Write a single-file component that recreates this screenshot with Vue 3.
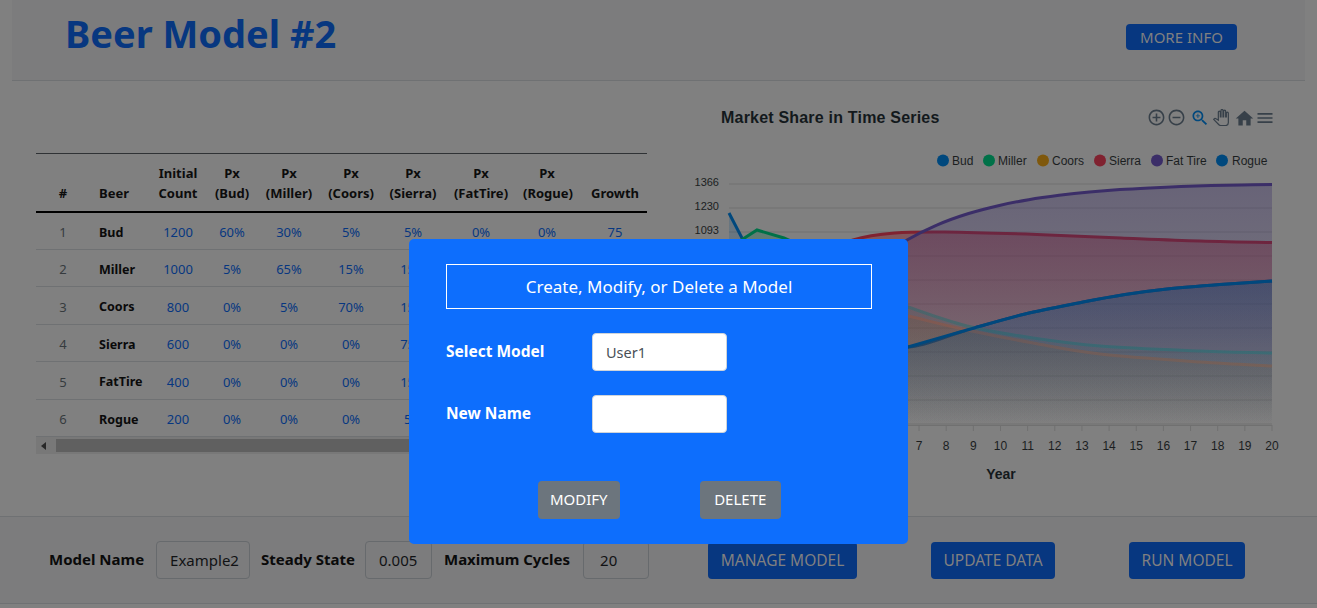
<script setup>
const cols = [54, 65, 46, 62, 52, 72, 52, 84, 48, 88]
const heads = [['#'], ['Beer'], ['Initial', 'Count'], ['Px', '(Bud)'], ['Px', '(Miller)'], ['Px', '(Coors)'], ['Px', '(Sierra)'], ['Px', '(FatTire)'], ['Px', '(Rogue)'], ['Growth']]
const rows = [
  [1, 'Bud', 1200, '60%', '30%', '5%', '5%', '0%', '0%', 75],
  [2, 'Miller', 1000, '5%', '65%', '15%', '15%', '0%', '0%', 50],
  [3, 'Coors', 800, '0%', '5%', '70%', '15%', '10%', '0%', 40],
  [4, 'Sierra', 600, '0%', '0%', '0%', '75%', '15%', '10%', 30],
  [5, 'FatTire', 400, '0%', '0%', '0%', '15%', '75%', '10%', 20],
  [6, 'Rogue', 200, '0%', '0%', '0%', '5%', '5%', '90%', 10]
]

const smooth = (p) => {
  let d = `M${p[0][0]} ${p[0][1]}`
  for (let i = 0; i < p.length - 1; i++) {
    const a = p[i - 1] || p[i], b = p[i], c = p[i + 1], e = p[i + 2] || c
    const c1x = b[0] + (c[0] - a[0]) / 6, c1y = b[1] + (c[1] - a[1]) / 6
    const c2x = c[0] - (e[0] - b[0]) / 6, c2y = c[1] - (e[1] - b[1]) / 6
    d += `C${c1x.toFixed(1)} ${c1y.toFixed(1)} ${c2x.toFixed(1)} ${c2y.toFixed(1)} ${c[0]} ${c[1]}`
  }
  return d
}
// Fat Tire settles exponentially toward its ceiling to the right of the dialog.
const fatTail = Array.from({ length: 13 }, (_, i) => {
  const x = 907 + (i * 365) / 12
  return [Number(x.toFixed(1)), Number((183 + 57 * Math.exp(-(x - 907) / 99)).toFixed(1))]
})
const rogueTail = [[908, 347], [967, 330], [1025, 314], [1083, 302], [1125, 294.5], [1167, 289], [1220, 284.5], [1272, 281]]
// Drawn in series order: each later translucent area washes over the earlier lines.
const raw = [
  { id: 'bud', color: '#00487d', o: 0.2, sharp: true, pts: [[729, 213], [757, 267], [784, 300], [860, 335], ...rogueTail] },
  { id: 'mil', color: '#007148', stroke: 'url(#miller-line)', o: 0.25, sharp: true, pts: [[729, 248], [757, 230], [784, 238], [811, 250], [850, 285], [908, 307], [967, 326], [1033, 338], [1100, 346], [1200, 351], [1272, 353]] },
  { id: 'coo', color: '#7f580c', stroke: '#8f7558', o: 0.25, pts: [[729, 283], [800, 295], [860, 305], [908, 316], [967, 330], [1033, 343], [1100, 354], [1200, 362], [1272, 366]] },
  { id: 'sie', color: '#802230', o: 0.45, pts: [[729, 319], [756, 290], [800, 262], [853, 240], [895, 233], [945, 232], [1037, 234.5], [1121, 238], [1200, 241], [1272, 242.5]] },
  { id: 'fat', color: '#3b2e68', o: 0.35, pts: [[729, 354], [756, 340], [800, 310], [850, 275], ...fatTail] },
  { id: 'rog', color: '#00487d', o: 0.32, pts: [[729, 389], [780, 380], [850, 365], ...rogueTail] }
]
const series = raw.map((s) => {
  const line = s.sharp
    ? `M${s.pts.slice(0, 4).map((p) => p.join(' ')).join('L')}` + smooth(s.pts.slice(3)).replace(/^M[^C]*/, '')
    : smooth(s.pts)
  const last = s.pts[s.pts.length - 1]
  return { ...s, line, area: `${line}L${last[0]} 425L${s.pts[0][0]} 425Z` }
})
const grid = [184, 208, 232, 256, 280, 304, 328, 352, 376, 400, 424]
const yLabels = ['1366', '1230', '1093', '956', '820', '683', '546', '410', '273', '137', '0']
const xLabels = Array.from({ length: 21 }, (_, i) => ({ t: i, x: 729 + 27.15 * i }))
const legend = [
  { t: 'Bud', cx: 943, x: 952, c: '#00487d' },
  { t: 'Miller', cx: 989, x: 998, c: '#007148' },
  { t: 'Coors', cx: 1043, x: 1052, c: '#7f580c' },
  { t: 'Sierra', cx: 1100, x: 1109, c: '#802230' },
  { t: 'Fat Tire', cx: 1157, x: 1166, c: '#3b2e68' },
  { t: 'Rogue', cx: 1222, x: 1232, c: '#00487d' }
]
</script>

<template>
  <div class="page">
    <header class="top">
      <h1>Beer Model #2</h1>
      <button class="btn info">MORE INFO</button>
    </header>

    <main class="main">
      <section class="tablewrap">
        <div class="clip">
          <table>
            <colgroup>
              <col v-for="(w, i) in cols" :key="i" :style="{ width: w + 'px' }" />
            </colgroup>
            <thead>
              <tr>
                <th v-for="(h, i) in heads" :key="i" :class="{ left: i === 1 }">
                  <span v-for="l in h" :key="l" class="hl">{{ l }}</span>
                </th>
              </tr>
            </thead>
            <tbody>
              <tr v-for="r in rows" :key="r[0]">
                <td v-for="(v, i) in r" :key="i" :class="i === 0 ? 'num' : i === 1 ? 'name' : 'val'">{{ v }}</td>
              </tr>
            </tbody>
          </table>
        </div>
        <div class="scroll">
          <span class="arrow"></span>
          <span class="thumb"></span>
        </div>
      </section>

      <svg class="chart" viewBox="660 81 657 435" width="657" height="435">
        <defs>
          <linearGradient v-for="s in series" :id="'g-' + s.id" :key="s.id" x1="0" y1="0" x2="0" y2="1">
            <stop offset="0" :stop-color="s.color" :stop-opacity="s.o" />
            <stop offset="1" :stop-color="s.color" stop-opacity="0" />
          </linearGradient>
          <linearGradient id="miller-line" gradientUnits="userSpaceOnUse" x1="820" y1="0" x2="905" y2="0">
            <stop offset="0" stop-color="#007148" />
            <stop offset="1" stop-color="#3f8a80" />
          </linearGradient>
        </defs>
        <text x="721" y="122.5" class="ctitle">Market Share in Time Series</text>

        <g fill="#374049">
          <svg x="1147" y="108" width="19" height="19" viewBox="0 0 24 24"><path d="M13 7h-2v4H7v2h4v4h2v-4h4v-2h-4V7zm-1-5C6.48 2 2 6.48 2 12s4.48 10 10 10 10-4.48 10-10S17.52 2 12 2zm0 18c-4.41 0-8-3.59-8-8s3.59-8 8-8 8 3.59 8 8-3.59 8-8 8z" /></svg>
          <svg x="1167" y="108" width="19" height="19" viewBox="0 0 24 24"><path d="M7 11v2h10v-2H7zm5-9C6.48 2 2 6.48 2 12s4.48 10 10 10 10-4.48 10-10S17.52 2 12 2zm0 18c-4.41 0-8-3.59-8-8s3.59-8 8-8 8 3.59 8 8-3.59 8-8 8z" /></svg>
          <svg x="1190" y="108" width="20" height="20" viewBox="0 0 24 24" fill="#00487d"><path d="M15.5 14h-.79l-.28-.27C15.41 12.59 16 11.11 16 9.5 16 5.91 13.09 3 9.5 3S3 5.91 3 9.5 5.91 16 9.5 16c1.61 0 3.09-.59 4.23-1.57l.27.28v.79l5 4.99L20.49 19l-4.99-5zm-6 0C7.01 14 5 11.99 5 9.5S7.01 5 9.5 5 14 7.01 14 9.5 11.99 14 9.5 14z" /><path d="M12 10h-2v2H9v-2H7V9h2V7h1v2h2v1z" /></svg>
          <svg x="1213" y="109" width="16" height="17" viewBox="0 0 24 24" fill="none" stroke="#374049" stroke-width="1.8"><path d="M23 5.5V20c0 2.2-1.8 4-4 4h-7.3c-1.08 0-2.1-.43-2.85-1.19L1 14.83s1.26-1.23 1.3-1.25c.22-.19.49-.29.79-.29.22 0 .42.06.6.16.04.01 4.31 2.46 4.31 2.46V4c0-.83.67-1.5 1.5-1.5S11 3.17 11 4v7h1V1.5c0-.83.67-1.5 1.5-1.5S15 .67 15 1.5V11h1V2.5c0-.83.67-1.5 1.5-1.5s1.5.67 1.5 1.5V11h1V5.5c0-.83.67-1.5 1.5-1.5s1.5.67 1.5 1.5z" /></svg>
          <svg x="1234" y="108" width="21" height="21" viewBox="0 0 24 24"><path d="M10 20v-6h4v6h5v-8h3L12 3 2 12h3v8z" /></svg>
          <svg x="1255" y="108" width="20" height="20" viewBox="0 0 24 24"><path d="M3 18h18v-2H3v2zm0-5h18v-2H3v2zm0-7v2h18V6H3z" /></svg>
        </g>

        <g class="legend">
          <g v-for="l in legend" :key="l.t">
            <circle :cx="l.cx" cy="160.5" r="6" :fill="l.c" />
            <text :x="l.x" y="165">{{ l.t }}</text>
          </g>
        </g>

        <line v-for="y in grid" :key="y" x1="729" x2="1272" :y1="y" :y2="y" stroke="#707070" />
        <text v-for="(t, i) in yLabels" :key="t" x="719" :y="grid[i] + 2" class="ylab" text-anchor="end">{{ t }}</text>

        <g v-for="s in series" :key="s.id">
          <path :d="s.area" :fill="'url(#g-' + s.id + ')'" />
          <path :d="s.line" fill="none" :stroke="s.stroke || s.color" stroke-width="3" />
        </g>

        <line x1="729" x2="1272" y1="425.5" y2="425.5" stroke="#707070" />
        <g stroke="#707070">
          <line v-for="x in xLabels" :key="x.t" :x1="x.x" :x2="x.x" y1="425" y2="431" />
        </g>
        <text v-for="x in xLabels" :key="'x' + x.t" :x="x.x" y="449.5" class="axis" text-anchor="middle">{{ x.t }}</text>
        <text x="1001" y="479" class="axtitle" text-anchor="middle">Year</text>
      </svg>
    </main>

    <footer class="bottom">
      <label class="flabel">Model Name</label>
      <input class="finput w94" value="Example2" readonly />
      <label class="flabel">Steady State</label>
      <input class="finput w67" value="0.005" readonly />
      <label class="flabel">Maximum Cycles</label>
      <input class="finput w66" value="20" readonly />
      <button class="btn act a1">MANAGE MODEL</button>
      <button class="btn act a2">UPDATE DATA</button>
      <button class="btn act a3">RUN MODEL</button>
    </footer>

    <div class="modalpos">
      <div class="modal">
        <div class="mtitle">Create, Modify, or Delete a Model</div>
        <div class="mrow">
          <label>Select Model</label>
          <input value="User1" readonly />
        </div>
        <div class="mrow">
          <label>New Name</label>
          <input value="" readonly />
        </div>
        <div class="mbtns">
          <button class="gray">MODIFY</button>
          <button class="gray">DELETE</button>
        </div>
      </div>
    </div>
  </div>
</template>

<style>
html, body { background: #808080; }
</style>

<style scoped>
.page {
  position: relative;
  width: 1317px;
  height: 608px;
  overflow: hidden;
  background: #808080;
  font-family: "Noto Sans", "Open Sans", sans-serif;
  color: #111214;
}
.top {
  display: flex;
  align-items: flex-start;
  justify-content: space-between;
  height: 80px;
  margin: 0 12px;
  padding: 0 68px 0 53px;
  border-bottom: 1px solid #6f7173;
  background: #7c7c7d;
}
h1 {
  margin: 7px 0 0;
  font-size: 38px;
  line-height: 52px;
  font-weight: 700;
  color: #073780;
}
.btn {
  border: 0;
  font-family: inherit;
  color: #808080;
  background: #073780;
  border-radius: 4px;
  padding: 0;
}
.info {
  width: 111px;
  height: 26px;
  margin-top: 24px;
  font-size: 15px;
}
.main {
  display: flex;
  height: 435px;
}
.tablewrap {
  width: 611px;
  margin: 72px 0 0 36px;
  flex: none;
}
.clip { overflow: hidden; height: 284px; }
table {
  table-layout: fixed;
  border-collapse: collapse;
  width: 623px;
  font-size: 13px;
}
th {
  height: 58px;
  padding: 0 0 8px;
  box-sizing: border-box;
  vertical-align: bottom;
  text-align: center;
  font-weight: 700;
  border-top: 1px solid #2f3235;
  border-bottom: 2px solid #000;
  line-height: 20px;
  color: #0c0c0c;
}
th.left { text-align: left; padding-left: 9px; }
.hl { display: block; white-space: nowrap; }
td {
  height: 37.5px;
  padding: 3px 0 0;
  box-sizing: border-box;
  text-align: center;
  border-bottom: 1px solid #6f7173;
}
.num { color: #363b3e; }
.name { text-align: left; padding-left: 9px; font-weight: 700; font-size: 12.5px; color: #0a0a0a; }
.val { color: #073780; }
.scroll {
  display: flex;
  align-items: center;
  height: 17px;
  background: #787878;
}
.arrow {
  width: 0;
  height: 0;
  margin-left: 5px;
  border: 4px solid transparent;
  border-right: 5px solid #282828;
  border-left: 0;
}
.thumb {
  width: 520px;
  height: 13px;
  margin-left: 10px;
  background: #606060;
}
.chart {
  display: block;
  flex: none;
  margin-left: 13px;
  font-family: "Liberation Sans", Arial, sans-serif;
}
.ctitle { font-size: 16px; font-weight: 700; fill: #13191c; letter-spacing: 0.2px; }
.legend text { font-size: 12px; fill: #1b1e1f; }
.axis { font-size: 12px; fill: #1b1e1f; }
.ylab { font-size: 11px; fill: #1b1e1f; }
.axtitle { font-size: 14px; font-weight: 700; fill: #13191c; }
.bottom {
  display: flex;
  align-items: center;
  height: 86px;
  padding-left: 49px;
  border-top: 1px solid #6f7173;
  border-bottom: 1px solid #6f7173;
  background: #7c7c7d;
}
.flabel { font-size: 15px; font-weight: 700; color: #0a0a0a; white-space: nowrap; padding-bottom: 2px; }
.finput {
  height: 38px;
  box-sizing: border-box;
  margin: 0 11px 0 12px;
  padding: 0 0 0 13px;
  border: 1px solid #676a6d;
  border-radius: 4px;
  background: #7c7c7d;
  font-family: inherit;
  font-size: 15px;
  color: #111214;
}
.w94 { width: 94px; }
.w67 { width: 67px; margin-left: 10px; margin-right: 12px; }
.w66 { width: 66px; padding-left: 16px; margin-left: 13px; margin-right: 0; }
.act { height: 37px; font-size: 15.5px; }
.a1 { width: 149px; margin-left: 59px; }
.a2 { width: 124px; margin-left: 74px; }
.a3 { width: 116px; margin-left: 74px; }
.modalpos {
  position: absolute;
  inset: 0;
  display: flex;
  justify-content: center;
  padding-top: 239px;
  box-sizing: border-box;
}
.modal {
  width: 499px;
  height: 305px;
  box-sizing: border-box;
  padding: 25px 37px 0;
  border-radius: 5px;
  background: #0d6efd;
  color: #fff;
}
.mtitle {
  width: 426px;
  height: 45px;
  box-sizing: border-box;
  border: 1px solid #fff;
  font-size: 17px;
  line-height: 43px;
  text-align: center;
}
.mrow {
  display: flex;
  align-items: center;
  height: 38px;
  margin-top: 24px;
}
.mrow label {
  width: 146px;
  font-size: 15.5px;
  font-weight: 700;
  padding-bottom: 2px;
}
.mrow input {
  width: 135px;
  height: 38px;
  box-sizing: border-box;
  padding: 0 0 0 13px;
  border: 1px solid #ced4da;
  border-radius: 4px;
  background: #fff;
  font-family: inherit;
  font-size: 14.5px;
  color: #495057;
}
.mbtns {
  display: flex;
  gap: 80px;
  margin: 48px 0 0 92px;
}
.gray {
  width: 81.5px;
  height: 38px;
  padding: 0 0 2px;
  border: 0;
  border-radius: 4px;
  background: #6c757d;
  color: #fff;
  font-family: inherit;
  font-size: 15px;
}
</style>
